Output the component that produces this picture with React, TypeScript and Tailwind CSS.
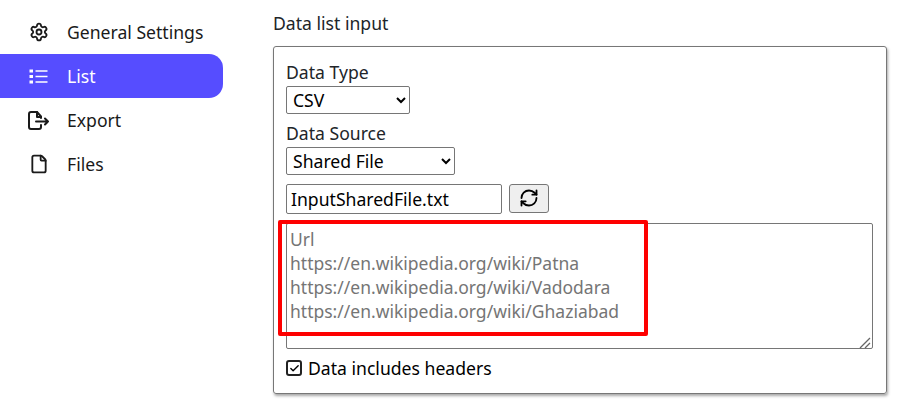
import { File, RefreshCw, Settings, Check } from 'lucide-react';

function ListIcon() {
  return (
    <svg width="19" height="19" viewBox="0 0 19 19" fill="none" stroke="currentColor" strokeWidth="1.6">
      <rect x="0.5" y="2.5" width="3.5" height="3" fill="currentColor" stroke="none" />
      <rect x="0.5" y="8" width="3.5" height="3" fill="currentColor" stroke="none" />
      <rect x="0.5" y="13.5" width="3.5" height="3" fill="currentColor" stroke="none" />
      <path d="M6.5 4h12M6.5 9.5h12M6.5 15h12" />
    </svg>
  );
}

function ExportIcon() {
  return (
    <svg width="21" height="19" viewBox="0 0 21 19" fill="none" stroke="currentColor" strokeWidth="2" strokeLinecap="round" strokeLinejoin="round">
      <path d="M13 7V5.5L9 1H3a2 2 0 0 0-2 2v13a2 2 0 0 0 2 2h8a2 2 0 0 0 2-2v-2" />
      <path d="M9 1v5h4" />
      <path d="M8 10.500h12M17 7.500l3 3-3 3" />
    </svg>
  );
}

const navItems = [
  { label: 'General Settings', icon: <Settings size={20} strokeWidth={2.2} />, active: false },
  { label: 'List', icon: <ListIcon />, active: true },
  { label: 'Export', icon: <ExportIcon />, active: false },
  { label: 'Files', icon: <File size={20} strokeWidth={2.2} />, active: false },
];

const urls = `Url
https://en.wikipedia.org/wiki/Patna
https://en.wikipedia.org/wiki/Vadodara
https://en.wikipedia.org/wiki/Ghaziabad`;

export default function App() {
  return (
    <div className="relative flex h-[417px] w-[904px] overflow-hidden bg-white font-['Noto_Sans','Open_Sans',sans-serif] text-[17.6px] text-black">
      {/* Sidebar */}
      <nav className="flex w-[223px] shrink-0 flex-col pt-[10px]">
        {navItems.map((item) => (
          <div
            key={item.label}
            className={`flex h-[44px] items-center rounded-r-[14px] ${
              item.active ? 'bg-[#564dff] text-white' : 'text-[#1a1a1a]'
            }`}
          >
            <span className="flex w-[67px] justify-center pl-[10px]">{item.icon}</span>
            <span>{item.label}</span>
          </div>
        ))}
      </nav>

      {/* Main */}
      <main className="ml-[50px] w-[614px] pt-[11px]">
        <h2 className="h-[24px] text-[17.6px] font-normal leading-[24px] text-[#212529]">Data list input</h2>
        <div className="relative mt-[11px] h-[348px] rounded-[3px] border border-[#777] px-[12px] pt-[13px] shadow-[1px_2px_3px_rgba(0,0,0,0.35)]">
          <label className="block h-[24px] leading-[24px] text-[#212529]">Data Type</label>
          <select className="mt-[2px] block h-[28px] w-[124px] rounded-[2px] border border-[#767676] bg-white pl-[2px] text-[17.6px]">
            <option>CSV</option>
          </select>
          <label className="mt-[7px] block h-[24px] leading-[24px] text-[#212529]">Data Source</label>
          <select className="mt-[2px] block h-[28px] w-[169px] rounded-[2px] border border-[#767676] bg-white pl-[2px] text-[17.6px]">
            <option>Shared File</option>
          </select>
          <div className="mt-[9px] flex items-center gap-[7px]">
            <input
              readOnly
              value="InputSharedFile.txt"
              className="h-[30px] w-[216px] rounded-[2px] border border-[#767676] px-[4px] text-[17.6px]"
            />
            <button className="flex h-[29px] w-[40px] -translate-y-[1px] items-center justify-center rounded-[3px] border border-[#767676] bg-[#efefef]">
              <RefreshCw size={20} strokeWidth={2.2} />
            </button>
          </div>
          <textarea
            placeholder={urls}
            className="mt-[9px] block h-[126px] w-[587px] resize-none rounded-[2px] border border-[#767676] px-[3px] py-[3px] text-[17.5px] leading-[24px] placeholder:text-[#757575]"
          />
          {/* Resize grip of the text area */}
          <svg className="absolute left-[585px] top-[290px]" width="13" height="12" viewBox="0 0 13 12" stroke="#666" strokeWidth="1.3" fill="none">
            <path d="M1 11L11 1M6 11l5-5" />
          </svg>
          <label className="mt-[7px] flex h-[24px] items-center">
            <span className="flex h-[16px] w-[16px] items-center justify-center rounded-[3px] border-2 border-[#222] bg-white">
              <Check size={11} strokeWidth={3} />
            </span>
            <span className="ml-[6px] leading-[24px]">Data includes headers</span>
          </label>
        </div>
      </main>

      {/* Red annotation over the textarea */}
      <div className="pointer-events-none absolute left-[278px] top-[220px] h-[116px] w-[370px] rounded-[2px] border-[4px] border-[#fe0000]" />
    </div>
  );
}
